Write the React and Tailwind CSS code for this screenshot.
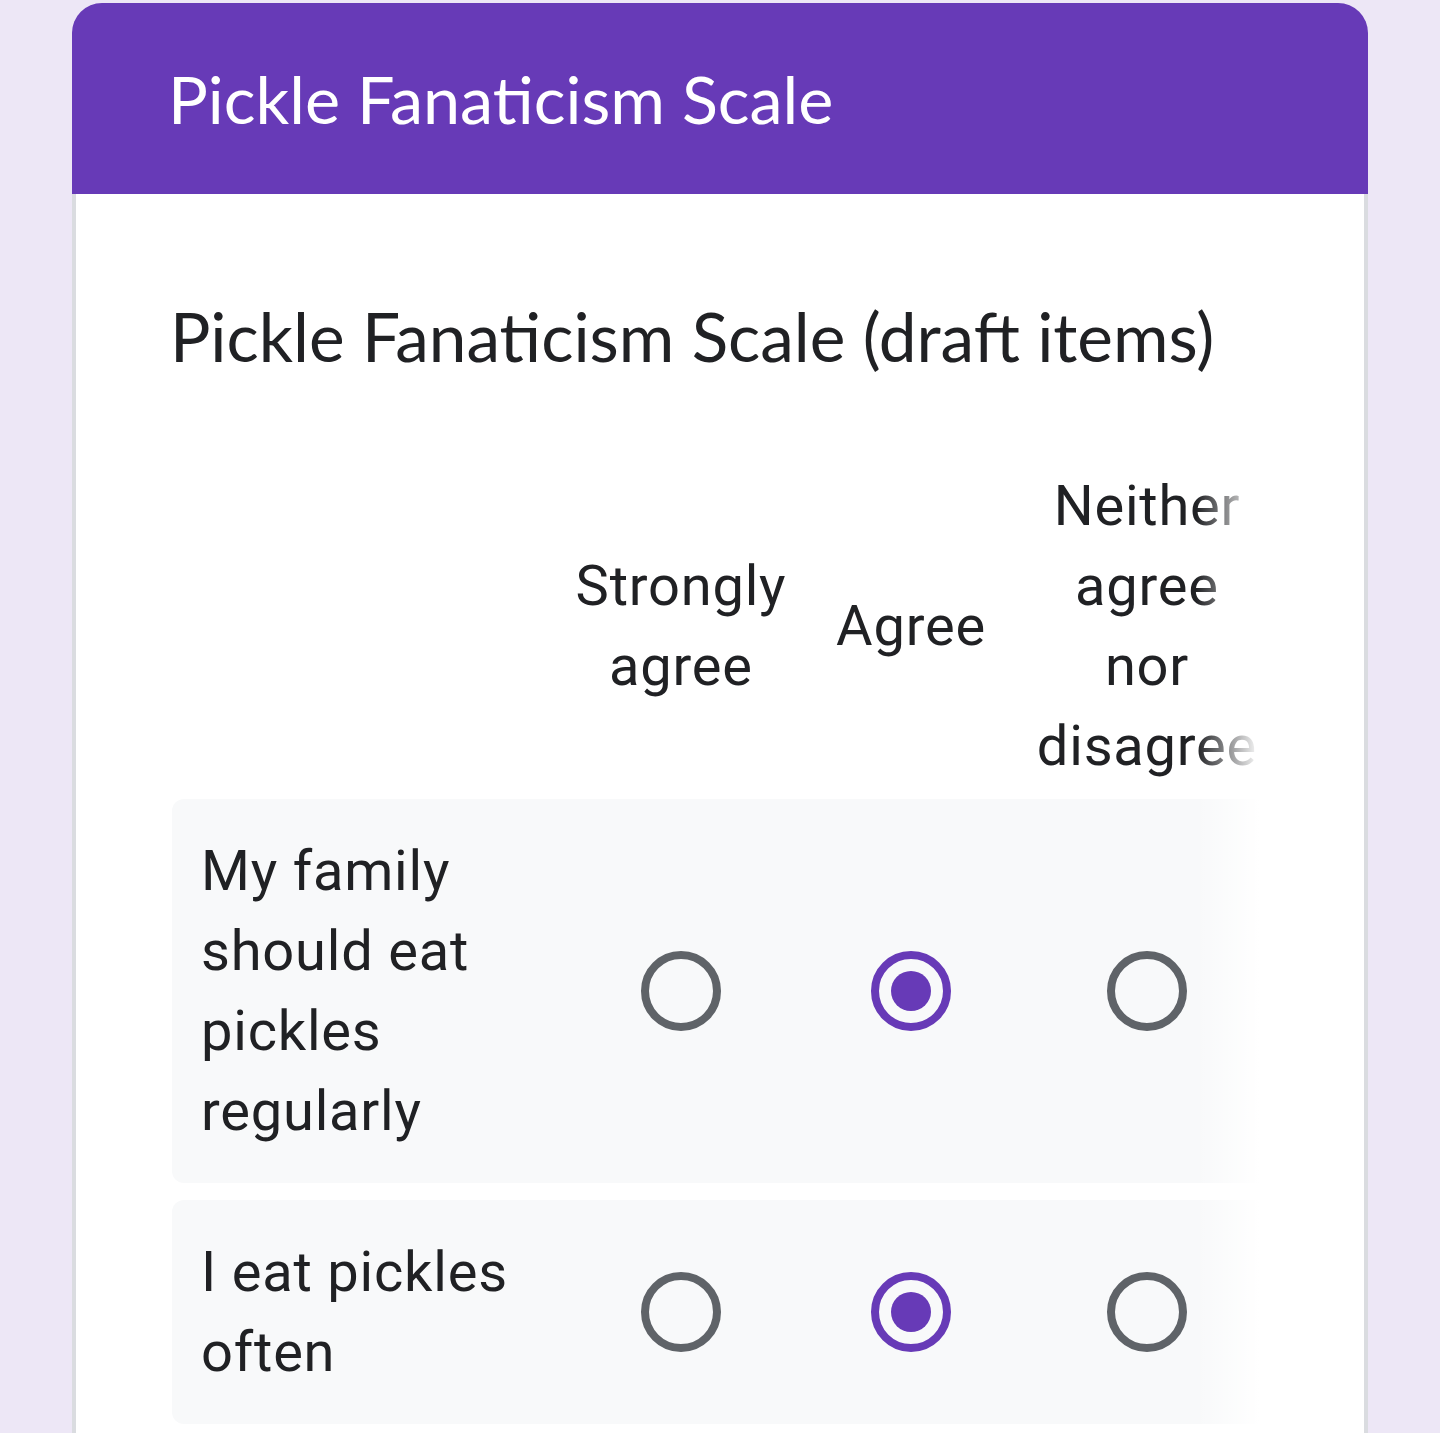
/*
  App.jsx – Grid (Likert) question from a form, rendered at a large mobile scale.
*/
const COLUMNS = ['Strongly agree', 'Agree', 'Neither agree nor disagree'];

const ROWS = [
  { label: 'My family should eat pickles regularly', answer: 1 },
  { label: 'I eat pickles often', answer: 1 },
];

const GRID_COLS = 'grid grid-cols-[390px_238px_222px_250px]';

const Radio = ({ checked }) => (
  <span
    className={`w-[80px] h-[80px] rounded-full border-[8px] flex items-center justify-center ${
      checked ? 'border-[#673ab7]' : 'border-[#5f6368]'
    }`}
  >
    {checked && <span className="w-[40px] h-[40px] rounded-full bg-[#673ab7]" />}
  </span>
);

const App = () => {
  const titleFont = "font-['Lato','Open_Sans',sans-serif]";
  const bodyFont  = "font-['Roboto','Liberation_Sans',sans-serif] text-[56px] leading-[80px] tracking-[0.8px] text-[#202124]";

  return (
    <div className="min-h-screen bg-[#ede7f6] px-[72px] pt-[3px]">
      <div className="rounded-t-[30px] overflow-hidden">

        {/* Form header */}
        <header className="h-[191px] bg-[#673ab7] flex items-center pl-[96px]">
          <h1 className={`${titleFont} text-[66.5px] leading-none text-white`}>Pickle Fanaticism Scale</h1>
        </header>

        <section className="bg-white border-x-4 border-[#dadce0] pl-[96px] pt-[102px] min-h-[1240px]">
          <h2 className={`${titleFont} -ml-[2px] text-[67.5px] leading-[80px] text-[#202124]`}>
            Pickle Fanaticism Scale (draft items)
          </h2>

          {/* Grid question */}
          <div className="relative mt-[90px] w-[1088px] overflow-hidden">
            <div className={`${GRID_COLS} items-center ${bodyFont} mb-[13px]`}>
              <div />
              {COLUMNS.map((col) => (
                <div key={col} className="text-center px-3">{col}</div>
              ))}
            </div>

            <div className="flex flex-col gap-[17px]">
              {ROWS.map((row) => (
                <div key={row.label} className={`${GRID_COLS} w-[1100px] items-center bg-[#f8f9fa] rounded-[12px] py-8`}>
                  <div className={`${bodyFont} pl-[29px] pr-[40px]`}>{row.label}</div>
                  {COLUMNS.map((col, i) => (
                    <div key={col} className="flex justify-center">
                      <Radio checked={row.answer === i} />
                    </div>
                  ))}
                </div>
              ))}
            </div>

            {/* Horizontal scroll fade */}
            <div className="absolute inset-y-0 right-0 w-[64px] bg-linear-to-r from-white/0 to-white pointer-events-none" />
          </div>
        </section>
      </div>
    </div>
  );
};

export default App;
